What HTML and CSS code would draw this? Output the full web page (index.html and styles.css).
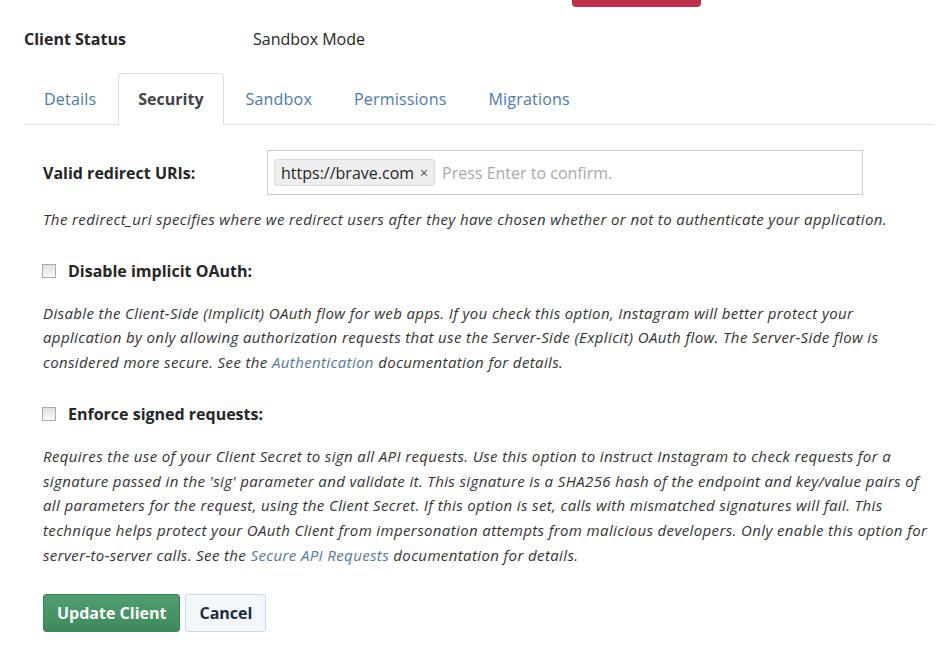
FILE: index.html
```html
<!DOCTYPE html>
<html lang="en">
<head>
    <meta charset="UTF-8">
    <meta name="viewport" content="width=device-width, initial-scale=1.0">
    <title>Manage Client</title>
    <link rel="stylesheet" href="styles.css">
</head>
<body>
    <div class="page">
        <div class="top-actions">
            <span class="danger-btn"></span>
        </div>

        <div class="status-row">
            <span class="status-label">Client Status</span>
            <span class="status-value">Sandbox Mode</span>
        </div>

        <ul class="tabs">
            <li><a href="#">Details</a></li>
            <li class="active"><a href="#">Security</a></li>
            <li><a href="#">Sandbox</a></li>
            <li><a href="#">Permissions</a></li>
            <li><a href="#">Migrations</a></li>
        </ul>

        <form class="security-form">
            <div class="field-row">
                <label class="field-label">Valid redirect URIs:</label>
                <div class="tag-input">
                    <span class="tag">https://brave.com <span class="tag-x">&times;</span></span>
                    <span class="placeholder">Press Enter to confirm.</span>
                </div>
            </div>
            <p class="help">The redirect_uri specifies where we redirect users after they have chosen whether or not to authenticate your application.</p>

            <label class="check-row">
                <span class="checkbox"></span>
                <span class="check-label">Disable implicit OAuth:</span>
            </label>
            <p class="help">Disable the Client-Side (Implicit) OAuth flow for web apps. If you check this option, Instagram will better protect your application by only allowing authorization requests that use the Server-Side (Explicit) OAuth flow. The Server-Side flow is considered more secure. See the <a href="#">Authentication</a> documentation for details.</p>

            <label class="check-row">
                <span class="checkbox"></span>
                <span class="check-label">Enforce signed requests:</span>
            </label>
            <p class="help">Requires the use of your Client Secret to sign all API requests. Use this option to instruct Instagram to check requests for a signature passed in the 'sig' parameter and validate it. This signature is a SHA256 hash of the endpoint and key/value pairs of all parameters for the request, using the Client Secret. If this option is set, calls with mismatched signatures will fail. This technique helps protect your OAuth Client from impersonation attempts from malicious developers. Only enable this option for server-to-server calls. See the <a href="#">Secure API Requests</a> documentation for details.</p>

            <div class="actions">
                <button type="button" class="btn-primary">Update Client</button>
                <button type="button" class="btn-default">Cancel</button>
            </div>
        </form>
    </div>
</body>
</html>
```

FILE: styles.css
```css
body {
    margin: 0;
    font-family: "Open Sans", Lato, sans-serif;
    color: #262626;
    background-color: #fff;
}
.page {
    width: 909px;
    padding-left: 24px;
}
.top-actions {
    height: 7px;
    padding-left: 548px;
}
.danger-btn {
    display: block;
    width: 129px;
    height: 7px;
    background-color: #c0304a;
    border-radius: 0 0 4px 4px;
}
.status-row {
    display: flex;
    align-items: center;
    height: 64px;
    font-size: 16px;
}
.status-label {
    width: 229px;
    font-weight: bold;
}
.tabs {
    display: flex;
    list-style: none;
    margin: 2px 0 0 0;
    padding: 0;
    border-bottom: 1px solid #ddd;
}
.tabs li {
    margin-right: 2px;
    margin-bottom: -1px;
}
.tabs a {
    display: block;
    padding: 14px 19px 14px 19px;
    font-size: 16px;
    line-height: 22px;
    letter-spacing: 0.2px;
    color: #4a7bb3;
    text-decoration: none;
    border: 1px solid transparent;
    border-radius: 4px 4px 0 0;
}
.tabs li.active a {
    color: #444;
    font-weight: bold;
    letter-spacing: 0;
    border-color: #ddd #ddd #fff #ddd;
    background-color: #fff;
}
.security-form {
    padding: 25px 0 0 19px;
    font-size: 15px;
}
.field-row {
    display: flex;
    align-items: center;
}
.field-label {
    width: 224px;
    font-size: 16px;
    font-weight: bold;
}
.tag-input {
    display: flex;
    align-items: center;
    width: 582px;
    height: 43px;
    padding: 0 6px;
    border: 1px solid #ccc;
}
.tag {
    display: inline-flex;
    align-items: center;
    height: 25px;
    padding: 0 6px;
    font-size: 16px;
    color: #262626;
    background-color: #eee;
    border: 1px solid #ddd;
    border-radius: 3px;
}
.tag-x {
    margin-left: 6px;
    font-size: 14px;
    color: #555;
}
.placeholder {
    margin-left: 7px;
    font-size: 16px;
    color: #aaa;
}
.help {
    margin: 12px 0 0 0;
    font-style: italic;
    line-height: 24.7px;
    letter-spacing: 0.38px;
    color: #333;
}
.help a {
    color: #5378a6;
    text-decoration: none;
}
.check-row {
    display: flex;
    align-items: center;
    margin-top: 28px;
    margin-bottom: 19px;
}
.checkbox {
    width: 12px;
    height: 12px;
    margin-left: -1px;
    margin-right: 12px;
    border: 1px solid #aaa;
    background: linear-gradient(#e0e0e0, #fafafa);
}
.check-label {
    font-size: 16px;
    font-weight: bold;
}
.check-row + .help {
    margin-top: 0;
}
.actions {
    display: flex;
    align-items: center;
    gap: 5px;
    margin-top: 27px;
}
.btn-primary {
    height: 38px;
    padding: 0 13px;
    font-family: inherit;
    font-size: 16px;
    font-weight: bold;
    color: #fff;
    background: linear-gradient(#4f9f6f, #3f8a5c);
    border: 1px solid #3b8456;
    border-radius: 3px;
}
.btn-default {
    height: 38px;
    padding: 0 13px;
    font-family: inherit;
    font-size: 16px;
    font-weight: bold;
    color: #1f2d44;
    background-color: #f3f6fa;
    border: 1px solid #c9d9ec;
    border-radius: 3px;
}
```
